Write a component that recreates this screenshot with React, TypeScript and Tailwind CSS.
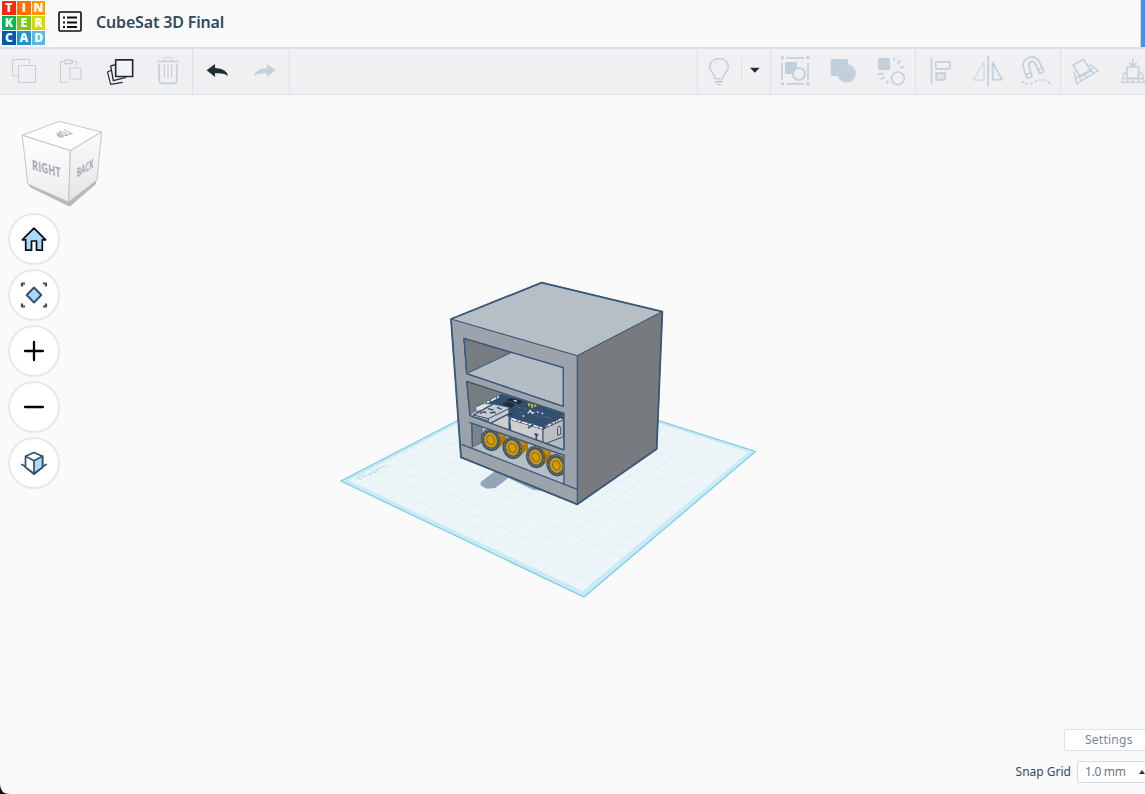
import React from 'react';

const INK = '#1d2f33';
const PALE = '#c3d0dc';
const NAVY = '#34506f';
const EDGE = '#3a587a';

const tiles = [
  ['T', 'bg-[#f8280c]'], ['I', 'bg-[#ff6f00]'], ['N', 'bg-[#ff9800]'],
  ['K', 'bg-[#00b956]'], ['E', 'bg-[#78cb0c]'], ['R', 'bg-[#d3dc00]'],
  ['C', 'bg-[#0358b5]'], ['A', 'bg-[#1f93d3]'], ['D', 'bg-[#55bce8]'],
];

function Slot({ box, width, children }: { box: string; width: string; children: React.ReactNode }) {
  return (
    <button className={`h-12 shrink-0 ${width}`}>
      <svg viewBox={box} className="block h-full w-full" fill="none" stroke={PALE} strokeWidth="4" strokeLinejoin="round">
        {children}
      </svg>
    </button>
  );
}

function Header() {
  return (
    <header className="flex h-[47px] shrink-0 items-start bg-[#fafafa]">
      <div className="grid w-[46px] grid-cols-3 gap-px bg-white p-px pr-[0.5px] pl-[2px] font-['Open_Sans',sans-serif]">
        {tiles.map(([letter, color]) => (
          <span key={letter} className={`flex h-[14px] items-center justify-center text-[12px] leading-none font-extrabold text-white ${color}`}>
            {letter}
          </span>
        ))}
      </div>
      <svg viewBox="0 0 24 22" className="mt-[11px] ml-3 h-[22px] w-6" fill="none" stroke="#0c0c10">
        <rect x="1" y="1" width="22" height="19" rx="1" strokeWidth="1.600" />
        <path d="M9 6.500h10M9 11.500h10M9 16h10" strokeWidth="2" />
        <path d="M5 6.500h2M5 11.500h2M5 16h2" strokeWidth="2" />
      </svg>
      <h1 className="mt-[10px] ml-[14px] w-[140px] text-[16px] leading-6 font-semibold tracking-[-0.17px] whitespace-nowrap text-[#34495e]">CubeSat 3D Final</h1>
      <div className="ml-auto h-full w-[5px] border-l border-[#d4d4d8] bg-[#4c8fe2]" />
    </header>
  );
}

function Toolbar() {
  return (
    <nav className="flex h-12 shrink-0 overflow-hidden border-b border-[#dbe1e9] bg-[#f0f0f3] shadow-[inset_0_2px_0_#dadfea]">
      <div className="flex border-r border-[#d9e1ea]">
        <Slot box="0 141 144 144" width="w-12">
          <path d="M54 227H37.500V178.500H88.500V195" strokeWidth="3" />
          <rect x="55.500" y="196.500" width="51" height="51" strokeWidth="3" />
        </Slot>
        <Slot box="144 141 144 144" width="w-12">
          <path d="M207 247H181.500V184.500H194M216 184.500H229.500V200" strokeWidth="3" />
          <path d="M194 180.500h22v10h-22z" strokeWidth="4" />
          <path d="M202 179h6" strokeWidth="3" />
          <rect x="210" y="204" width="33" height="33" strokeWidth="3.500" />
        </Slot>
        <Slot box="288 141 144 144" width="w-12">
          <path d="M346 194L332 198 340 242 378 232" stroke={INK} strokeWidth="4" />
          <path d="M334 211L322.500 216 332 253 368 247" stroke={INK} strokeWidth="3.500" />
          <rect x="347" y="179.500" width="51" height="50" strokeWidth="5" stroke={INK} fill="#f4f4f7" />
        </Slot>
        <Slot box="432 141 144 144" width="w-12">
          <path d="M473 184.500h62" strokeWidth="4.500" />
          <path d="M492 182q0-10 6-10h12q6 0 6 10" strokeWidth="3" />
          <path d="M477 193l1 49q1 8 9 8h34q8 0 9-8l1-49" strokeWidth="5" />
          <path d="M493 195v37M504 195v37M515 195v37" strokeWidth="3.500" strokeLinecap="round" />
        </Slot>
      </div>
      <div className="flex border-r border-[#d9e1ea]">
        <Slot box="579 141 144 144" width="w-12">
          <path d="M620 211l25-19v12q37 2 39 25-9-11-39-9v11z" fill={INK} stroke="none" />
        </Slot>
        <Slot box="723 141 144 144" width="w-12">
          <path d="M826 211l-25-19v12q-37 2-39 25 9-11 39-9v11z" fill={PALE} stroke="none" />
        </Slot>
      </div>
      <div className="ml-auto flex w-[73px] shrink-0 border-l border-[#d9e1ea]">
        <Slot box="24 141 129 144" width="w-[43px]">
          <path d="M76 236q-1-10-9-18c-16-18-5-42 20-42s36 24 20 42q-8 8-9 18z" strokeWidth="4.500" />
          <path d="M73 194q2-7 10-8" strokeWidth="2.500" />
          <path d="M75 245.500h23" strokeWidth="6" />
          <path d="M79 252h17q-8 9-17 0" fill={PALE} stroke="none" />
        </Slot>
        <Slot box="153 141 87 144" width="w-[29px]">
          <path d="M154 177v72" stroke="#d9e0e8" />
          <path d="M180 203h29l-14.500 15z" fill={INK} stroke="none" />
        </Slot>
      </div>
      <div className="flex w-[145px] shrink-0 border-l border-[#d9e1ea]">
        <Slot box="243 141 144 144" width="w-12">
          <path d="M289 173.500h53M289 251.500h53M276 188v51M354 188v51" strokeWidth="5" />
          <path d="M277.500 169v9M353.500 169v9M277.500 247v9M353.500 247v9" strokeWidth="9" />
          <rect x="285" y="186" width="36" height="36" rx="3" fill={PALE} stroke="none" />
          <circle cx="327" cy="222" r="18" fill="#f0f0f3" strokeWidth="6" />
        </Slot>
        <Slot box="387 141 144 144" width="w-12">
          <rect x="422" y="177" width="52" height="51" rx="4" fill={PALE} stroke="none" />
          <circle cx="470" cy="220" r="28" fill={PALE} stroke="none" />
          <circle cx="470" cy="220" r="24" stroke="#d1dae3" strokeWidth="1.500" />
        </Slot>
        <Slot box="531 141 144 144" width="w-12">
          <rect x="564" y="174" width="36" height="36" rx="3" fill={PALE} stroke="none" />
          <circle cx="624" cy="235" r="19" strokeWidth="5" />
          <path d="M611 182l3-8M622 192l9-10M630 204l12-4M563 223l17-3M573 239l10-9M590 250l4-8" strokeWidth="5" />
        </Slot>
      </div>
      <div className="flex w-[145px] shrink-0 border-l border-[#d9e1ea]">
        <Slot box="678 141 144 144" width="w-12">
          <path d="M724.500 174v78" strokeWidth="5" />
          <rect x="737.500" y="185.500" width="43" height="21" rx="2" strokeWidth="5" />
          <rect x="738.500" y="219.500" width="27" height="20" rx="1" strokeWidth="5" fill="#e0e5ec" />
        </Slot>
        <Slot box="822 141 144 144" width="w-12">
          <path d="M894.500 168v91" strokeWidth="5.500" />
          <path d="M882 186v54h-32z" strokeWidth="3" />
          <path d="M908 188v51h28z" strokeWidth="5.500" />
        </Slot>
        <Slot box="966 141 144 144" width="w-12">
          <path d="M1011 235L1000 202C992 173 1036 157 1049 187L1062 215 1049 220 1035 190C1027 180 1014 186 1017 197L1026 230Z" strokeWidth="5" />
          <path d="M1008 223l13-4M1043 209l14-5" strokeWidth="5" />
          <path d="M997 245l4 3M1008 252h4M1022 251l4-1M1035 245l4-1M1048 240h4M1061 240l4 1M1074 246l4 3" strokeWidth="5" strokeLinecap="round" />
        </Slot>
      </div>
      <div className="flex w-[85px] shrink-0 border-l border-[#d9e1ea]">
        <Slot box="1113 141 144 144" width="w-12">
          <path d="M1181 178l21 34-32 18-21-35z" strokeWidth="5" />
          <path d="M1152 215l8 36 65-39-22-17-9 6M1157 235l52-30M1168 232l5 11M1184 223l7 10M1202 209l8 11" strokeWidth="4" />
        </Slot>
        <Slot box="1257 141 144 144" width="w-12">
          <path d="M1311 231v-30h35v34h-35zM1328 177v20M1317 189l11 10 12-10" strokeWidth="5" />
          <path d="M1309 219h-7l-7 28h68l-7-28h-8M1299 236h60M1315 236l-4 10M1329 236v10M1343 236l4 10" strokeWidth="4" />
        </Slot>
      </div>
    </nav>
  );
}

type Pt = [number, number];
const A: Pt = [341, 481];
const B: Pt = [584, 597];
const C: Pt = [755.5, 451.5];
const D: Pt = [534, 381];

/* Perspective mapping of the unit square onto the work plane. */
function plane(u: number, v: number): string {
  const dx1 = B[0] - C[0], dx2 = D[0] - C[0], sx = A[0] - B[0] + C[0] - D[0];
  const dy1 = B[1] - C[1], dy2 = D[1] - C[1], sy = A[1] - B[1] + C[1] - D[1];
  const det = dx1 * dy2 - dx2 * dy1;
  const g = (sx * dy2 - dx2 * sy) / det;
  const h = (dx1 * sy - sx * dy1) / det;
  const w = g * u + h * v + 1;
  const x = (B[0] - A[0] + g * B[0]) * u + (D[0] - A[0] + h * D[0]) * v + A[0];
  const y = (B[1] - A[1] + g * B[1]) * u + (D[1] - A[1] + h * D[1]) * v + A[1];
  return `${(x / w).toFixed(2)} ${(y / w).toFixed(2)}`;
}

const steps = Array.from({ length: 19 }, (_, i) => 0.018 + ((i + 1) * 0.964) / 20);
const grid = steps
  .map((t) => `M${plane(t, 0.018)}L${plane(t, 0.982)}M${plane(0.018, t)}L${plane(0.982, t)}`)
  .join('');
const inner = `M${plane(0.018, 0.018)}L${plane(0.982, 0.018)}L${plane(0.982, 0.982)}L${plane(0.018, 0.982)}Z`;

function Battery({ x, y }: { x: number; y: number }) {
  return (
    <g>
      <path d={`M${x} ${y - 33}l46 12 1 24-29 26z`} fill="#b07a00" stroke="none" />
      <path d={`M${x + 10} ${y - 30}l33 9-7 12-18 3z`} fill="#c68b00" stroke="none" />
      <ellipse cx={x} cy={y} rx="29" ry="34" transform={`rotate(-18 ${x} ${y})`} fill="#3b556f" stroke="none" />
      <ellipse cx={x + 1} cy={y - 1} rx="24" ry="29" transform={`rotate(-18 ${x} ${y})`} fill="none" stroke="#a38a3d" strokeWidth="2" strokeDasharray="9 3" />
      <ellipse cx={x} cy={y} rx="18.5" ry="23" transform={`rotate(-18 ${x} ${y})`} fill="#d59a08" stroke="#a38a3d" strokeWidth="1" />
      <ellipse cx={x} cy={y} rx="11" ry="14" transform={`rotate(-18 ${x} ${y})`} fill="#d99b00" stroke="#6b6750" strokeWidth="3" />
    </g>
  );
}

function Scene() {
  return (
    <svg viewBox="0 95 1145 699" className="col-start-1 row-start-1 block h-full w-full">
      <defs>
        <filter id="soft"><feGaussianBlur stdDeviation="2" /></filter>
        <clipPath id="bay"><path d="M95 459L370 559V645L97 531Z" /></clipPath>
      </defs>
      <path d={`M${A}L${B}L${C}L${D}Z`} fill="#c9ebf5" stroke="#76cce3" strokeWidth="1.2" />
      <path d={inner} fill="#edf5f8" />
      <path d={grid} stroke="#dceef4" strokeWidth="0.6" fill="none" />
      <path d="M355 480l4-2 1 2 4-4 2 1 3-4 1 3 3-4 2 1 3-3M377 470l2-3 1 2 3-3 2 1 2-2M357 478l9-5M370 473l8-4" stroke="#9fd2e1" strokeWidth="0.9" strokeDasharray="1.5 0.7" fill="none" />
      <g transform="translate(440 270) scale(.333333)" strokeLinejoin="round">
        <path d="M122 636L166 602 210 605 290 640 322 664 280 660 205 624 166 654 140 656 122 646Z" fill="#8498ac" opacity=".85" filter="url(#soft)" />
        <g stroke={EDGE} strokeWidth="3">
          <path d="M33 147L412 257V703L63 562Z" fill="#9ca3aa" />
          <path d="M305 38L667 125 412 257 33 147Z" fill="#b6bec6" />
          <path d="M412 257L667 125 650 537 412 703Z" fill="#777b7f" />
          <path d="M33 147L63 562 412 703 650 537 667 125 305 38Z" fill="none" strokeWidth="5.5" />
          <path d="M72 205L370 293V409L80 311Z" fill="#b4bcc5" />
          <path d="M72 205L213 248 80 311Z" fill="#767c80" />
          <path d="M80 334L372 430V540L90 437Z" fill="#b2bac2" />
          <path d="M80 334L187 369 91 434Z" fill="#777c80" stroke="none" />
        </g>
        <g stroke={NAVY} strokeWidth="3">
          <path d="M133 461L211 425V488Z" fill="#cfcdcf" stroke="none" />
          <path d="M208 447L309 477V524L214 489Z" fill="#cfcdcf" />
          <path d="M309 477L370 450V500L309 524Z" fill="#c0bdc0" />
          <path d="M111 410L185 373 369 429V445L309 478 208 447 202 415Z" fill="#34506f" />
          <path d="M122 407L177 380M213 446L309 475M317 470L366 446" stroke="#edf0f2" strokeWidth="5" strokeDasharray="18 3 9 4" />
          <path d="M107 411L130 401 160 401 128 420 108 425Z" fill="#dfe1e2" strokeWidth="2" />
          <path d="M101 435L161 401 207 411V431L145 463 101 450Z" fill="#c8cbce" strokeWidth="4" />
          <path d="M101 435L145 446 207 416M145 446V462" fill="none" />
          <path d="M107 441L143 451V458L107 448Z" fill="#777e87" strokeWidth="2" />
          <path d="M119 430l16-5 3 5M150 429l14-3 2 5M171 412l14 6M143 416l17 4" fill="none" strokeWidth="4" />
          <path d="M203 390l13-4 30 9-10 5zM190 402l13-4 19 7-9 6zM208 436l10-5" fill="#1d2a37" stroke="#1d2a37" strokeWidth="4" />
          <path d="M266 400l2 9M276 402l1 12M286 402v9" stroke="#bdbb28" strokeWidth="6" />
          <path d="M263 430l8-9 5 9 7-3M292 424l3 5M305 428l4 4M248 437l5 2M221 391l10 3" fill="none" stroke="#d9e0e5" strokeWidth="4" />
          <path d="M226 408l15 6M235 424l16 5M250 414l11 5M285 436l16 5M314 440l20 5M273 458l13 4" stroke="#56728f" strokeWidth="2" />
          <path d="M318 470l6-3M334 462l5-3M351 454l5-3" stroke="#c43a55" strokeWidth="4" />
          <path d="M208 446v43M289 490v24M283 492l12 4M264 474l16-10M202 436l14 4" fill="none" strokeWidth="5" />
          <path d="M353 475l4-7 5 4v21l-9 3z" fill="#cbc9cc" />
        </g>
        <path d="M90 439L372 541V557L90 457Z" fill="#9ca3aa" />
        <g clipPath="url(#bay)">
          <path d="M95 457L372 557V647L97 531Z" fill="#b5bec7" />
          <path d="M95 457L126 470V517L97 532Z" fill="#7e858a" stroke={NAVY} strokeWidth="2" />
          <Battery x={152} y={510} />
          <Battery x={217} y={534} />
          <Battery x={287} y={561} />
          <Battery x={349} y={586} />
        </g>
        <g fill="none" stroke={EDGE} strokeWidth="4">
          <path d="M88 457L375 557M90 437L372 540M95 460L97 532M65 523L412 658M372 430V540M372 557V645M72 205L370 293V409L80 311Z" />
          <path d="M80 334L372 430M80 334L90 437" />
        </g>
      </g>
      <path d="M0 784Q0 794 10 794H0Z" fill="#120616" />
    </svg>
  );
}

function ViewCube() {
  return (
    <svg viewBox="0 0 360 300" className="block h-[100px] w-[120px]">
      <defs>
        <linearGradient id="side" x2="0" y2="1"><stop stopColor="#fff" /><stop offset="1" stopColor="#ececee" /></linearGradient>
        <linearGradient id="back" x2="0" y2="1"><stop stopColor="#fbfbfb" /><stop offset="1" stopColor="#e4e4e6" /></linearGradient>
      </defs>
      <path d="M85 222L206 274 288 208V222L209 290 90 232Z" fill="#b9b9b9" />
      <g stroke="#bcbcbe" strokeWidth="2.500" strokeLinejoin="round">
        <path d="M67 76L177 34 305 66 211 122Z" fill="#fefefe" />
        <path d="M67 76L211 122 206 276 83 222Z" fill="url(#side)" />
        <path d="M211 122L305 66 291 210 206 276Z" fill="url(#back)" />
      </g>
      <g fill="#a7abb3" fontFamily="Open Sans, sans-serif" fontWeight="700">
        <text transform="matrix(1 .28 .06 1 97 179)" fontSize="42" textLength="86" lengthAdjust="spacingAndGlyphs">RIGHT</text>
        <text transform="matrix(1 -.62 -.02 1 230 203)" fontSize="38" textLength="50" lengthAdjust="spacingAndGlyphs">BACK</text>
        <text transform="matrix(-.95 .36 -.80 -.50 198 57)" fontSize="37" textLength="40" lengthAdjust="spacingAndGlyphs">TOP</text>
      </g>
    </svg>
  );
}

function Round({ children }: { children: React.ReactNode }) {
  return (
    <button className="flex h-13 w-13 items-center justify-center rounded-full border-2 border-[#e6e8e9] bg-white">
      <svg viewBox="0 0 28 28" className="block h-7 w-7" fill="none" stroke={NAVY} strokeWidth="1.700" strokeLinejoin="round">
        {children}
      </svg>
    </button>
  );
}

function ViewControls() {
  return (
    <div className="flex flex-col gap-1 pt-[3px] pl-2">
      <Round>
        <path d="M14 3.200L25.700 14.800H22.300V25.200H16.500V16H11.500V25.200H5.700V14.800H2.300Z" fill="#a8dafc" stroke="#0b0d0e" strokeWidth="1.700" />
      </Round>
      <Round>
        <path d="M14 6.500L21.300 14 14 21.500 6.700 14Z" fill="#a8dafc" strokeWidth="1.900" />
        <path d="M5 2.500H2V5.500M23 2.500H26V5.500M2 22.500V25.500H5M26 22.500V25.500H23" strokeWidth="2.200" />
      </Round>
      <Round>
        <path d="M5 14H23M14 5V23" stroke="#050505" strokeWidth="2.300" strokeLinecap="round" />
      </Round>
      <Round>
        <path d="M5 14H23" stroke="#050505" strokeWidth="2.300" strokeLinecap="round" />
      </Round>
      <Round>
        <path d="M1.200 15.200L5.500 17.300M26.800 15.200L22.500 17.300M3.500 16.300L14 25 24.500 16.300" />
        <path d="M5.500 7.200L14 3.500 22.500 7.200V18.300L14 24.700 5.500 18.300Z" fill="#fff" />
        <path d="M14 11.700L22.500 7.200V18.300L14 24.700Z" fill="#a8dafc" />
        <path d="M5.500 7.200L14 11.700" />
      </Round>
    </div>
  );
}

export default function App() {
  return (
    <div className="flex h-[794px] w-[1145px] flex-col overflow-hidden bg-[#fafafa] font-['Noto_Sans',sans-serif]">
      <Header />
      <Toolbar />
      <main className="grid min-h-0 flex-1 grid-cols-1 grid-rows-1">
        <Scene />
        <div className="col-start-1 row-start-1 flex justify-between">
          <aside className="pt-[15px]">
            <ViewCube />
            <ViewControls />
          </aside>
          <div className="flex flex-col items-end justify-end pb-[11px] text-[12px] tracking-[0.25px] whitespace-nowrap">
            <button className="flex h-[22px] w-[81px] items-center rounded-l-[2px] border border-r-0 border-[#dde3ec] bg-white pl-5 text-[#7a8798]">Settings</button>
            <div className="mt-[10px] flex items-center">
              <label className="mr-[6px] tracking-normal text-[#34495e]">Snap Grid</label>
              <button className="flex h-[22px] w-[68px] items-center overflow-hidden rounded-l-[2px] border border-r-0 border-[#d3dce5] bg-white pl-[7px] tracking-[-0.3px] text-[#6f7780]">
                <span>1.0 mm</span>
                <svg viewBox="0 0 6 4" className="ml-auto block h-1 w-[6px] shrink-0"><path d="M0 4L3 0 6 4Z" fill="#333" /></svg>
              </button>
            </div>
          </div>
        </div>
      </main>
    </div>
  );
}
